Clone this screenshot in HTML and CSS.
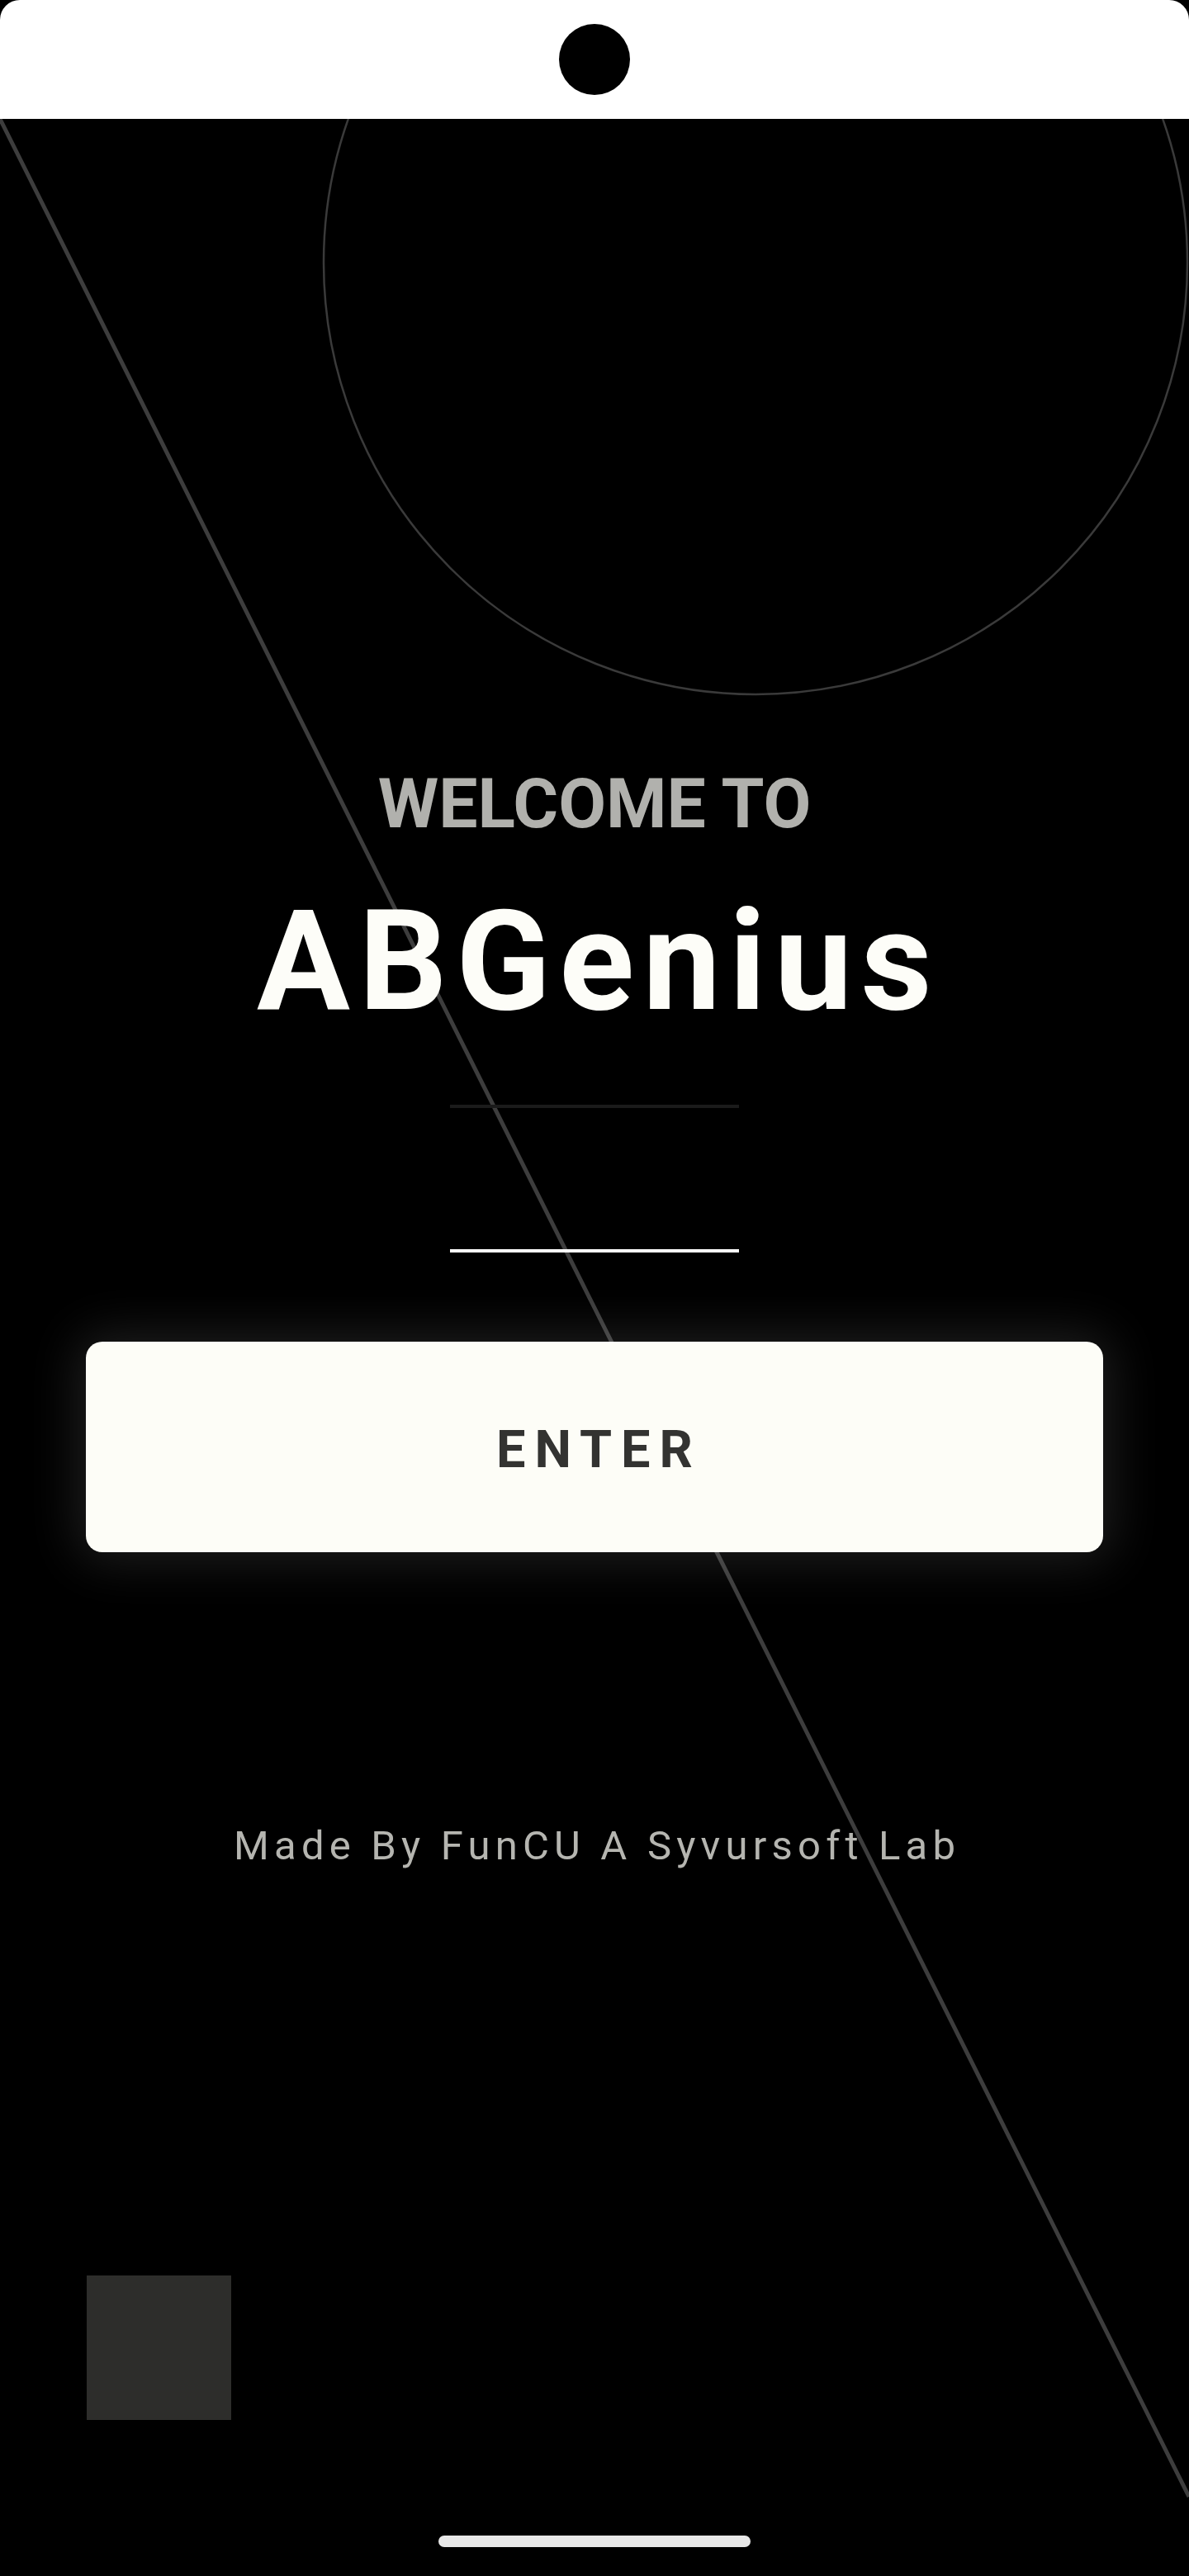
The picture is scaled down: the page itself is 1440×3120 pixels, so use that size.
FILE: index.html
```html
<!DOCTYPE html>
<html lang="en">
<head>
<meta charset="utf-8">
<title>ABGenius</title>
<link rel="stylesheet" href="styles.css">
</head>
<body>
<div class="screen">
  <svg class="decor" width="1440" height="3120" viewBox="0 0 1440 3120" aria-hidden="true">
    <circle cx="915" cy="318" r="523" fill="none" stroke="#3a3a3a" stroke-width="2.5"/>
    <line x1="0" y1="144" x2="1440" y2="3024" stroke="#3d3d3d" stroke-width="5"/>
  </svg>
  <header class="status-bar">
    <div class="camera"></div>
  </header>
  <main class="content">
    <h2 class="welcome">WELCOME TO</h2>
    <h1 class="brand">ABGenius</h1>
    <div class="divider dim"></div>
    <div class="divider bright"></div>
    <button class="enter-btn" type="button"><span>ENTER</span></button>
    <p class="credit">Made By FunCU A Syvursoft Lab</p>
    <div class="bottom-row">
      <div class="square"></div>
    </div>
    <div class="home-indicator"></div>
  </main>
</div>
</body>
</html>
```

FILE: styles.css
```css
* { box-sizing: border-box; }

html, body {
  margin: 0;
  padding: 0;
  background: #000;
}

body {
  font-family: Roboto, "Liberation Sans", Arial, sans-serif;
  width: 1440px;
  height: 3120px;
  overflow: hidden;
}

.screen {
  position: relative;
  width: 1440px;
  height: 3120px;
  background: #000;
  display: flex;
  flex-direction: column;
}

.decor {
  position: absolute;
  left: 0;
  top: 0;
  z-index: 0;
}

.status-bar {
  position: relative;
  z-index: 2;
  height: 144px;
  background: #fff;
  border-radius: 24px 24px 0 0;
  display: flex;
  justify-content: center;
  align-items: center;
  flex-shrink: 0;
}

.camera {
  width: 86px;
  height: 86px;
  border-radius: 50%;
  background: #000;
}

.content {
  position: relative;
  z-index: 1;
  display: flex;
  flex-direction: column;
  align-items: center;
  padding-top: 788px;
  flex: 1;
}

.welcome {
  margin: 0;
  font-size: 84px;
  line-height: 84px;
  font-weight: 700;
  color: #b1b1ad;
  letter-spacing: 0;
}

.brand {
  margin: 65px 0 0;
  font-size: 168px;
  line-height: 168px;
  font-weight: 700;
  color: #fdfdf8;
  letter-spacing: 10.5px;
  padding-left: 10.5px;
}

.divider {
  width: 350px;
  height: 4px;
}

.divider.dim {
  margin-top: 89px;
  background: #1b1b1b;
}

.divider.bright {
  margin-top: 171px;
  background: #fff;
}

.enter-btn {
  margin-top: 108px;
  width: 1232px;
  height: 255px;
  border: none;
  border-radius: 20px;
  background: #fdfdf7;
  box-shadow: 0 0 60px 10px rgba(255, 255, 255, 0.12);
  display: flex;
  align-items: center;
  justify-content: center;
  font-family: Roboto, "Liberation Sans", Arial, sans-serif;
  font-size: 63px;
  line-height: 63px;
  font-weight: 700;
  color: #333331;
  letter-spacing: 11px;
  padding: 6px 0 0 11px;
  cursor: pointer;
}

.credit {
  margin: 331px 0 0;
  font-size: 49px;
  line-height: 49px;
  font-weight: 400;
  color: #b5b5b0;
  letter-spacing: 6.2px;
  padding-left: 6.2px;
}

.bottom-row {
  align-self: stretch;
  margin-top: 496px;
  padding-left: 105px;
  display: flex;
}

.square {
  width: 175px;
  height: 175px;
  background: #2d2d2b;
}

.home-indicator {
  margin-top: 140px;
  width: 378px;
  height: 14px;
  border-radius: 7px;
  background: #e8e8e8;
}
```
